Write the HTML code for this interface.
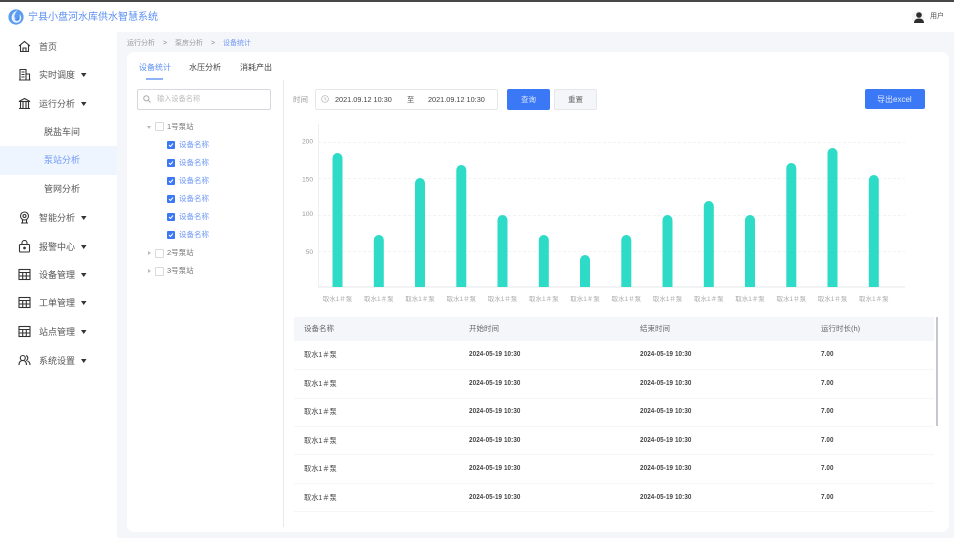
<!DOCTYPE html>
<html lang="zh">
<head>
<meta charset="utf-8">
<style>
html,body{margin:0;padding:0;width:954px;height:538px;overflow:hidden;background:#f5f6f9}
body{position:relative;font-family:"Liberation Sans","Noto Sans CJK SC",sans-serif;color:#555}
.a{position:absolute;white-space:nowrap}
.t{position:absolute;white-space:nowrap;line-height:12px}
.nav{font-size:9px;color:#555}
.car{position:absolute;left:81px;width:5.500px;height:4px;background:#333;clip-path:polygon(0 0,100% 0,50% 100%)}
.ic{position:absolute;left:18px;width:13px;height:13px}
.cb{position:absolute;left:167px;width:8px;height:8px;background:#3b78f5;border-radius:1px}
.cb svg{position:absolute;left:0;top:0}
.cb0{position:absolute;left:155px;width:7px;height:7px;border:1px solid #d8dae0;background:#fff;border-radius:1px}
.lb{font-size:7.500px;color:#6f98f7;left:179px}
.st{font-size:7.500px;color:#777;left:167px}
.row{position:absolute;left:294px;width:640px;height:1px;background:#f5f6f8}
.c{font-size:7.200px;color:#444}
.h{font-size:7.500px;color:#666}
.m{font-size:7px;color:#444;font-weight:bold;letter-spacing:.1px;font-family:"Liberation Sans Narrow","Liberation Sans",sans-serif;transform-origin:left center;transform:scaleX(.9)}
</style>
</head>
<body>
<div class="a" style="left:0;top:0;width:954px;height:2px;background:#484848"></div>
<div class="a" style="left:0;top:2px;width:954px;height:30px;background:#fff"></div>
<div class="a" style="left:0;top:32px;width:117px;height:506px;background:#fff"></div>

<!-- logo -->
<svg class="a" style="left:8px;top:9px" width="16" height="16" viewBox="0 0 16 16">
<circle cx="8" cy="8" r="7.600" fill="#5b9cf0"/>
<path d="M9.500 1.200C6 2.500 3.400 5.500 3.600 9c.2 2.900 2.400 4.800 5 4.700 2.800-.1 4.700-2.300 4.600-5-.1-1.600-.8-2.800-1.700-3.700.5 1.900.1 3.900-1.200 4.800C9 10.400 7 10 6.500 8.300 6 6.200 7.500 3.600 9.500 1.200z" fill="#e6f0fe"/>
<path d="M10.600 5.200c.6 2-.1 3.900-1.400 4.600C8 10.400 6.700 10 6.300 9c.3 1.800 1.500 3 3 2.800 1.700-.2 2.500-1.700 2.300-3.400-.1-1.200-.5-2.300-1-3.200z" fill="#3f87ea"/>
</svg>
<div class="t" style="left:28px;top:11px;font-size:10px;line-height:14px;color:#5b8ff2">宁县小盘河水库供水智慧系统</div>

<!-- user -->
<div class="a" style="left:912px;top:11px;width:12px;height:12px;border-radius:50%;background:#f3f4f6"></div>
<svg class="a" style="left:913px;top:11px" width="12" height="13" viewBox="0 0 12 13">
<circle cx="6" cy="4" r="2.800" fill="#2e2e2e"/><path d="M1 12c0-3 2-4.500 5-4.500s5 1.500 5 4.500z" fill="#2e2e2e"/>
</svg>
<div class="t" style="left:930px;top:11px;font-size:7px;color:#555">用户</div>

<!-- sidebar -->
<svg class="ic" style="top:40px" viewBox="0 0 13 13" fill="none" stroke="#333" stroke-width="1.100"><path d="M1 6L6.500 1.500 12 6M2.500 5v6.500h8V5M5 11.500V8h3v3.500"/></svg>
<div class="t nav" style="left:39px;top:41px">首页</div>

<svg class="ic" style="top:68px" viewBox="0 0 13 13" fill="none" stroke="#333" stroke-width="1.100"><path d="M1 12h11.500M2 12V1.500h6V12M8 6h3.500v6M3.500 4h3M3.500 6.500h3M3.500 9h3"/></svg>
<div class="t nav" style="left:39px;top:69px">实时调度</div><div class="car" style="top:73px"></div>

<svg class="ic" style="top:97px" viewBox="0 0 13 13" fill="none" stroke="#333" stroke-width="1.100"><path d="M1 4.500L6.500 1.500 12 4.500zM2.500 5v6M5 5v6M8 5v6M10.500 5v6M1 11.500h11"/></svg>
<div class="t nav" style="left:39px;top:98px">运行分析</div><div class="car" style="top:102px"></div>

<div class="t nav" style="left:44px;top:126px;color:#555">脱盐车间</div>
<div class="a" style="left:0;top:146px;width:117px;height:29px;background:#eef5fe"></div>
<div class="t nav" style="left:44px;top:154px;color:#6f98f7">泵站分析</div>
<div class="t nav" style="left:44px;top:183px">管网分析</div>

<svg class="ic" style="top:211px" viewBox="0 0 13 13" fill="none" stroke="#333" stroke-width="1.100"><circle cx="6.500" cy="5" r="4"/><circle cx="6.500" cy="5" r="1.500"/><path d="M4.500 9v3M8.500 9v3M3 12h7"/></svg>
<div class="t nav" style="left:39px;top:212px">智能分析</div><div class="car" style="top:216px"></div>

<svg class="ic" style="top:240px" viewBox="0 0 13 13" fill="none" stroke="#333" stroke-width="1.100"><rect x="1.500" y="4.500" width="10" height="7.500" rx="1"/><path d="M4 4.500V3a2.500 2.500 0 0 1 5 0v1.500"/><circle cx="6.500" cy="8" r=".8" fill="#333"/></svg>
<div class="t nav" style="left:39px;top:241px">报警中心</div><div class="car" style="top:245px"></div>

<svg class="ic" style="top:268px" viewBox="0 0 13 13" fill="none" stroke="#333" stroke-width="1.100"><rect x="1" y="1.500" width="11" height="10"/><path d="M1 4.500h11M1 8h11M4.700 4.500v7M8.300 4.500v7"/></svg>
<div class="t nav" style="left:39px;top:269px">设备管理</div><div class="car" style="top:273px"></div>

<svg class="ic" style="top:296px" viewBox="0 0 13 13" fill="none" stroke="#333" stroke-width="1.100"><rect x="1" y="1.500" width="11" height="10"/><path d="M1 4.500h11M1 8h11M4.700 4.500v7M8.300 4.500v7"/></svg>
<div class="t nav" style="left:39px;top:297px">工单管理</div><div class="car" style="top:301px"></div>

<svg class="ic" style="top:325px" viewBox="0 0 13 13" fill="none" stroke="#333" stroke-width="1.100"><rect x="1" y="1.500" width="11" height="10"/><path d="M1 4.500h11M1 8h11M4.700 4.500v7M8.300 4.500v7"/></svg>
<div class="t nav" style="left:39px;top:326px">站点管理</div><div class="car" style="top:330px"></div>

<svg class="ic" style="top:354px" viewBox="0 0 13 13" fill="none" stroke="#333" stroke-width="1.100"><circle cx="4.800" cy="4" r="2.500"/><path d="M1 11c0-3 1.500-4.500 3.800-4.500S8.500 8 8.500 11M8 1.700a2.500 2.500 0 0 1 0 4.800M9.500 7c1.500.6 2.500 2 2.500 4"/></svg>
<div class="t nav" style="left:39px;top:355px">系统设置</div><div class="car" style="top:359px"></div>

<!-- breadcrumb -->
<div class="t" style="left:127px;top:38px;font-size:7px;color:#999">运行分析</div>
<div class="t" style="left:163px;top:38px;font-size:7px;color:#888">&gt;</div>
<div class="t" style="left:175px;top:38px;font-size:7px;color:#999">泵房分析</div>
<div class="t" style="left:211px;top:38px;font-size:7px;color:#888">&gt;</div>
<div class="t" style="left:223px;top:38px;font-size:7px;color:#6f98f7">设备统计</div>

<!-- card -->
<div class="a" style="left:127px;top:52px;width:822px;height:480px;background:#fff;border-radius:7px"></div>

<!-- tabs -->
<div class="t" style="left:139px;top:62px;font-size:8px;color:#5b8ff2">设备统计</div>
<div class="a" style="left:146px;top:78px;width:17px;height:2px;background:#8fb3f7"></div>
<div class="t" style="left:189px;top:62px;font-size:8px;color:#444">水压分析</div>
<div class="t" style="left:240px;top:62px;font-size:8px;color:#444">消耗产出</div>

<!-- search -->
<div class="a" style="left:137px;top:89px;width:132px;height:19px;border:1px solid #d6d8dd;border-radius:2px;background:#fff"></div>
<svg class="a" style="left:143px;top:95px" width="8" height="8" viewBox="0 0 8 8" fill="none" stroke="#aaa" stroke-width="1"><circle cx="3.300" cy="3.300" r="2.600"/><path d="M5.300 5.300L7.500 7.500"/></svg>
<div class="t" style="left:157px;top:93px;font-size:7.200px;color:#bbb">输入设备名称</div>

<!-- tree -->
<div class="a" style="left:147px;top:126px;width:0;height:0;border-left:2px solid transparent;border-right:2px solid transparent;border-top:3px solid #bbb"></div>
<div class="cb0" style="top:122px"></div>
<div class="t st" style="top:121px">1号泵站</div>

<div class="cb" style="top:141px"><svg width="8" height="8" viewBox="0 0 8 8" fill="none" stroke="#fff" stroke-width="1"><path d="M2 4l1.500 1.500L6 2.500"/></svg></div><div class="t lb" style="top:139px">设备名称</div>
<div class="cb" style="top:159px"><svg width="8" height="8" viewBox="0 0 8 8" fill="none" stroke="#fff" stroke-width="1"><path d="M2 4l1.500 1.500L6 2.500"/></svg></div><div class="t lb" style="top:157px">设备名称</div>
<div class="cb" style="top:177px"><svg width="8" height="8" viewBox="0 0 8 8" fill="none" stroke="#fff" stroke-width="1"><path d="M2 4l1.500 1.500L6 2.500"/></svg></div><div class="t lb" style="top:175px">设备名称</div>
<div class="cb" style="top:195px"><svg width="8" height="8" viewBox="0 0 8 8" fill="none" stroke="#fff" stroke-width="1"><path d="M2 4l1.500 1.500L6 2.500"/></svg></div><div class="t lb" style="top:193px">设备名称</div>
<div class="cb" style="top:213px"><svg width="8" height="8" viewBox="0 0 8 8" fill="none" stroke="#fff" stroke-width="1"><path d="M2 4l1.500 1.500L6 2.500"/></svg></div><div class="t lb" style="top:211px">设备名称</div>
<div class="cb" style="top:231px"><svg width="8" height="8" viewBox="0 0 8 8" fill="none" stroke="#fff" stroke-width="1"><path d="M2 4l1.500 1.500L6 2.500"/></svg></div><div class="t lb" style="top:229px">设备名称</div>

<div class="a" style="left:148px;top:251px;width:0;height:0;border-top:2px solid transparent;border-bottom:2px solid transparent;border-left:3px solid #bbb"></div>
<div class="cb0" style="top:249px"></div>
<div class="t st" style="top:247px">2号泵站</div>
<div class="a" style="left:148px;top:269px;width:0;height:0;border-top:2px solid transparent;border-bottom:2px solid transparent;border-left:3px solid #bbb"></div>
<div class="cb0" style="top:267px"></div>
<div class="t st" style="top:265px">3号泵站</div>

<!-- divider -->
<div class="a" style="left:283px;top:80px;width:1px;height:447px;background:#e8e9ec"></div>

<!-- filter -->
<div class="t" style="left:293px;top:94px;font-size:7.500px;color:#999">时间</div>
<div class="a" style="left:315px;top:89px;width:181px;height:19px;border:1px solid #e6e7ea;border-radius:2px;background:#fff"></div>
<svg class="a" style="left:321px;top:95px" width="8" height="8" viewBox="0 0 8 8" fill="none" stroke="#bbb" stroke-width=".8"><circle cx="4" cy="4" r="3.400"/><path d="M4 2v2.200l1.300.8"/></svg>
<div class="t" style="left:335px;top:94px;font-size:7.300px;color:#444">2021.09.12 10:30</div>
<div class="t" style="left:407px;top:94px;font-size:7.200px;color:#555">至</div>
<div class="t" style="left:428px;top:94px;font-size:7.300px;color:#444">2021.09.12 10:30</div>
<div class="a" style="left:507px;top:89px;width:43px;height:21px;background:#3b78f5;border-radius:2px"></div>
<div class="t" style="left:521px;top:94px;font-size:7.500px;color:#dfe9fe">查询</div>
<div class="a" style="left:554px;top:89px;width:41px;height:19px;background:#f5f6f9;border:1px solid #e6e7ea;border-radius:2px"></div>
<div class="t" style="left:568px;top:94px;font-size:7.500px;color:#666">重置</div>
<div class="a" style="left:865px;top:89px;width:60px;height:20px;background:#3b78f5;border-radius:2px"></div>
<div class="t" style="left:877px;top:94px;font-size:8px;color:#dfe9fe">导出excel</div>

<!-- chart -->
<svg class="a" style="left:290px;top:120px" width="630" height="190" viewBox="290 120 630 190">
<g stroke="#f2f3f5" stroke-width="1" stroke-dasharray="3 2">
<path d="M318 142.500H905M318 178.500H905M318 215.500H905M318 251.500H905"/>
</g>
<path d="M318.500 124V287" stroke="#eeeff2" stroke-width="1"/>
<path d="M318 287H905" stroke="#e6e7ea" stroke-width="1"/>
<g font-size="6.500" fill="#999" text-anchor="end" font-family="Liberation Sans, sans-serif">
<text x="313" y="143.500">200</text><text x="313" y="181.500">150</text><text x="313" y="216">100</text><text x="313" y="254">50</text>
</g>
<g fill="#2ddbc6">
<path d="M332.500 287V158a5 5 0 0 1 10 0V287z"/>
<path d="M373.800 287V240a5 5 0 0 1 10 0V287z"/>
<path d="M415 287V183a5 5 0 0 1 10 0V287z"/>
<path d="M456.300 287V170a5 5 0 0 1 10 0V287z"/>
<path d="M497.500 287V220a5 5 0 0 1 10 0V287z"/>
<path d="M538.800 287V240a5 5 0 0 1 10 0V287z"/>
<path d="M580 287V260a5 5 0 0 1 10 0V287z"/>
<path d="M621.300 287V240a5 5 0 0 1 10 0V287z"/>
<path d="M662.500 287V220a5 5 0 0 1 10 0V287z"/>
<path d="M703.800 287V206a5 5 0 0 1 10 0V287z"/>
<path d="M745 287V220a5 5 0 0 1 10 0V287z"/>
<path d="M786.300 287V168a5 5 0 0 1 10 0V287z"/>
<path d="M827.500 287V153a5 5 0 0 1 10 0V287z"/>
<path d="M868.800 287V180a5 5 0 0 1 10 0V287z"/>
</g>
<g font-size="6.500" fill="#aaa" text-anchor="middle" font-family="Liberation Sans, Noto Sans CJK SC, sans-serif">
<text x="337.500" y="301">取水1＃泵</text><text x="378.800" y="301">取水1＃泵</text><text x="420" y="301">取水1＃泵</text><text x="461.300" y="301">取水1＃泵</text><text x="502.500" y="301">取水1＃泵</text><text x="543.800" y="301">取水1＃泵</text><text x="585" y="301">取水1＃泵</text><text x="626.300" y="301">取水1＃泵</text><text x="667.500" y="301">取水1＃泵</text><text x="708.800" y="301">取水1＃泵</text><text x="750" y="301">取水1＃泵</text><text x="791.300" y="301">取水1＃泵</text><text x="832.500" y="301">取水1＃泵</text><text x="873.800" y="301">取水1＃泵</text>
</g>
</svg>

<!-- table -->
<div class="a" style="left:294px;top:317px;width:640px;height:24px;background:#f5f6fa"></div>
<div class="a" style="left:936px;top:317px;width:2px;height:109px;background:#c4c7cd"></div>
<div class="t h" style="left:304px;top:323px">设备名称</div>
<div class="t h" style="left:469px;top:323px">开始时间</div>
<div class="t h" style="left:640px;top:323px">结束时间</div>
<div class="t h" style="left:821px;top:323px">运行时长(h)</div>

<div class="t c" style="left:304px;top:349px">取水1＃泵</div><div class="t m" style="left:469px;top:349px">2024-05-19 10:30</div><div class="t m" style="left:640px;top:349px">2024-05-19 10:30</div><div class="t m" style="left:821px;top:349px">7.00</div><div class="row" style="top:369px"></div>
<div class="t c" style="left:304px;top:378px">取水1＃泵</div><div class="t m" style="left:469px;top:378px">2024-05-19 10:30</div><div class="t m" style="left:640px;top:378px">2024-05-19 10:30</div><div class="t m" style="left:821px;top:378px">7.00</div><div class="row" style="top:398px"></div>
<div class="t c" style="left:304px;top:406px">取水1＃泵</div><div class="t m" style="left:469px;top:406px">2024-05-19 10:30</div><div class="t m" style="left:640px;top:406px">2024-05-19 10:30</div><div class="t m" style="left:821px;top:406px">7.00</div><div class="row" style="top:426px"></div>
<div class="t c" style="left:304px;top:435px">取水1＃泵</div><div class="t m" style="left:469px;top:435px">2024-05-19 10:30</div><div class="t m" style="left:640px;top:435px">2024-05-19 10:30</div><div class="t m" style="left:821px;top:435px">7.00</div><div class="row" style="top:454px"></div>
<div class="t c" style="left:304px;top:463px">取水1＃泵</div><div class="t m" style="left:469px;top:463px">2024-05-19 10:30</div><div class="t m" style="left:640px;top:463px">2024-05-19 10:30</div><div class="t m" style="left:821px;top:463px">7.00</div><div class="row" style="top:483px"></div>
<div class="t c" style="left:304px;top:492px">取水1＃泵</div><div class="t m" style="left:469px;top:492px">2024-05-19 10:30</div><div class="t m" style="left:640px;top:492px">2024-05-19 10:30</div><div class="t m" style="left:821px;top:492px">7.00</div><div class="row" style="top:511px"></div>
</body>
</html>
